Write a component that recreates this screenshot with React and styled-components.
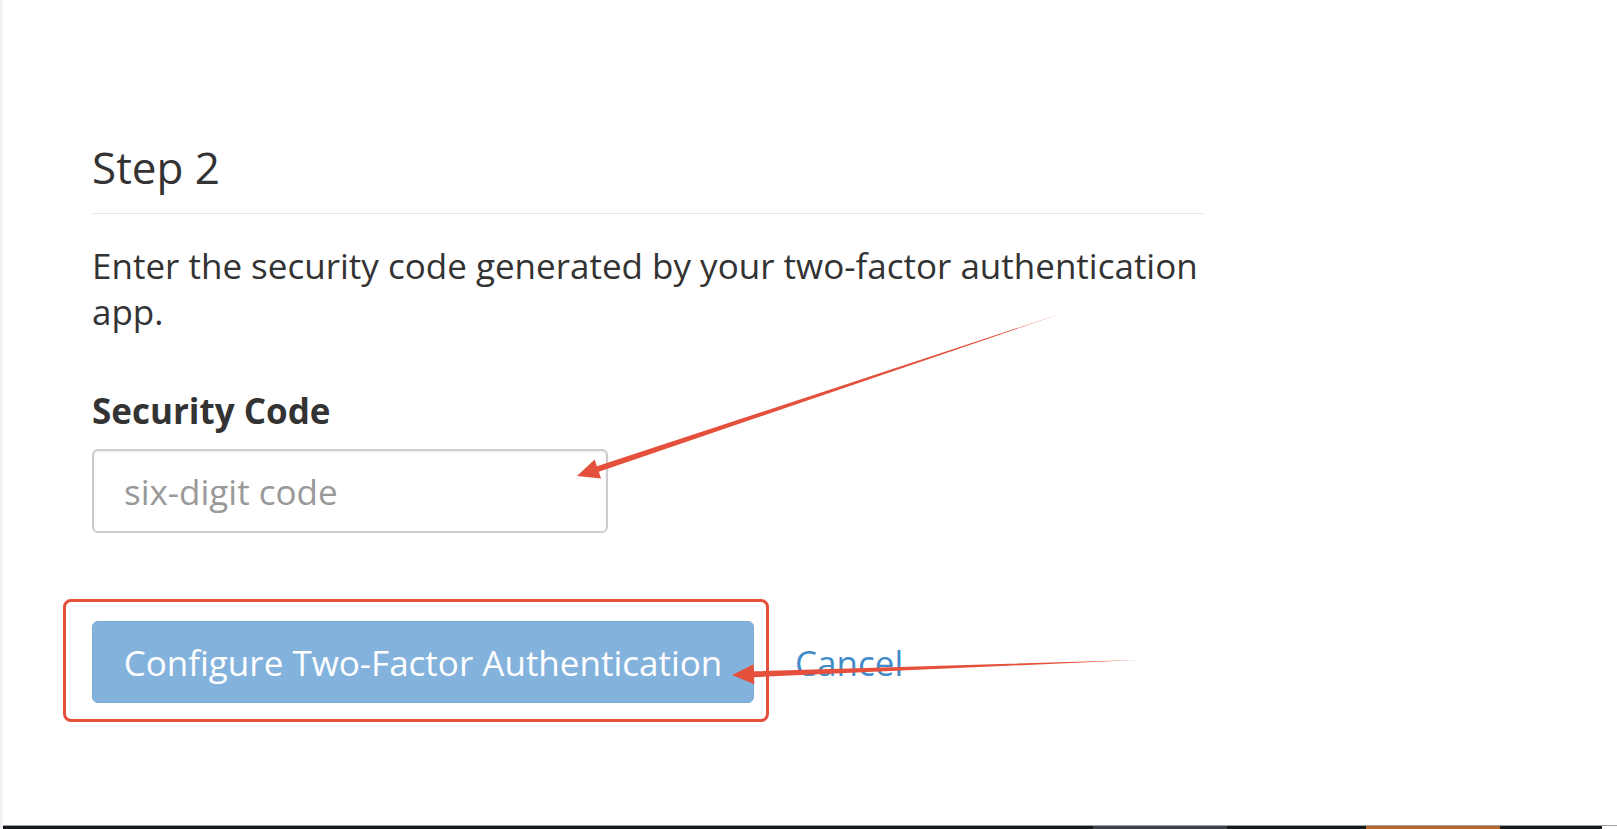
import React from 'react';
import styled, { createGlobalStyle } from 'styled-components';

const GlobalStyle = createGlobalStyle`
  html, body {
    margin: 0;
    padding: 0;
    background: #ffffff;
    font-family: "Open Sans", "Noto Sans", sans-serif;
  }
`;

const Page = styled.div`
  position: relative;
  min-height: 100vh;
  display: flex;
  flex-direction: column;
  box-sizing: border-box;
  border-left: 3px solid #f3f3f3;
  overflow: hidden;
`;

const Content = styled.main`
  flex: 1;
  width: 1112px;
  padding: 143px 0 0 89px;
`;

const Heading = styled.h2`
  margin: 0;
  padding-bottom: 22px;
  border-bottom: 1px solid #e6e6e6;
  font-size: 44px;
  line-height: 48px;
  font-weight: 400;
  color: #333333;
`;

const Text = styled.p`
  margin: 29px 0 0;
  font-size: 35px;
  line-height: 46px;
  color: #333333;
`;

const Label = styled.label`
  display: block;
  margin-top: 53px;
  font-size: 35px;
  line-height: 46px;
  font-weight: 700;
  color: #333333;
`;

const CodeInput = styled.input`
  display: block;
  margin-top: 15px;
  width: 516px;
  height: 84px;
  box-sizing: border-box;
  padding: 0 30px;
  border: 2px solid #cccccc;
  border-radius: 6px;
  box-shadow: inset 0 1px 2px rgba(0, 0, 0, 0.08);
  font-family: inherit;
  font-size: 35px;
  color: #555555;
  outline: none;

  &::placeholder {
    color: #999999;
  }
`;

const Actions = styled.div`
  margin-top: 88px;
  display: flex;
  align-items: center;
  gap: 41px;
`;

const ButtonWrap = styled.div`
  position: relative;
`;

const Highlight = styled.span`
  position: absolute;
  top: -22px;
  left: -29px;
  right: -15px;
  bottom: -19px;
  border: 3px solid #e4503b;
  border-radius: 8px;
  pointer-events: none;
`;

const PrimaryButton = styled.button`
  display: flex;
  align-items: center;
  justify-content: center;
  width: 662px;
  height: 82px;
  border: 1px solid #357ebd;
  border-radius: 6px;
  background: #428bca;
  opacity: 0.65;
  color: #ffffff;
  font-family: inherit;
  font-size: 35px;
  cursor: not-allowed;
`;

const CancelLink = styled.a`
  color: #428bca;
  font-size: 35px;
  text-decoration: none;
`;

const Overlay = styled.svg`
  position: absolute;
  left: 0;
  top: 0;
  width: 100%;
  height: 100%;
  pointer-events: none;
`;

const Taskbar = styled.footer`
  display: flex;
  height: 3px;
  border-top: 1px solid #9ea3a8;
  background: #17191d;
  margin-left: -3px;
`;

const Segment = styled.span`
  width: ${(p) => p.w}px;
  flex: ${(p) => (p.grow ? 1 : 'none')};
  background: ${(p) => p.color || 'transparent'};
`;

function arrowPoints(tx, ty, hx, hy, shaft = 6, headLen = 22, headHalf = 10) {
  const dx = hx - tx;
  const dy = hy - ty;
  const len = Math.hypot(dx, dy);
  const ux = dx / len;
  const uy = dy / len;
  const nx = -uy;
  const ny = ux;
  const bx = hx - ux * headLen;
  const by = hy - uy * headLen;
  const pts = [
    [tx, ty],
    [bx + (nx * shaft) / 2, by + (ny * shaft) / 2],
    [bx + nx * headHalf, by + ny * headHalf],
    [hx, hy],
    [bx - nx * headHalf, by - ny * headHalf],
    [bx - (nx * shaft) / 2, by - (ny * shaft) / 2],
  ];
  return pts.map((p) => p.join(',')).join(' ');
}

const Arrow = ({ from, to }) => (
  <polygon points={arrowPoints(from[0], from[1], to[0], to[1])} fill="#e4503b" />
);

const App = () => {
  return (
    <>
      <GlobalStyle />
      <Page>
        <Content>
          <Heading>Step 2</Heading>
          <Text>Enter the security code generated by your two-factor authentication app.</Text>
          <Label htmlFor="code">Security Code</Label>
          <CodeInput id="code" placeholder="six-digit code" />
          <Actions>
            <ButtonWrap>
              <PrimaryButton disabled>Configure Two-Factor Authentication</PrimaryButton>
              <Highlight />
            </ButtonWrap>
            <CancelLink href="#">Cancel</CancelLink>
          </Actions>
        </Content>
        <Taskbar>
          <Segment grow />
          <Segment w={134} color="#3d4147" />
          <Segment w={139} />
          <Segment w={134} color="#b5662a" />
          <Segment w={102} />
          <Segment w={15} color="#ffffff" />
        </Taskbar>
        <Overlay>
          <Arrow from={[1060, 313]} to={[574, 476]} />
          <Arrow from={[1134, 660]} to={[729, 675]} />
        </Overlay>
      </Page>
    </>
  );
};

export default App;
